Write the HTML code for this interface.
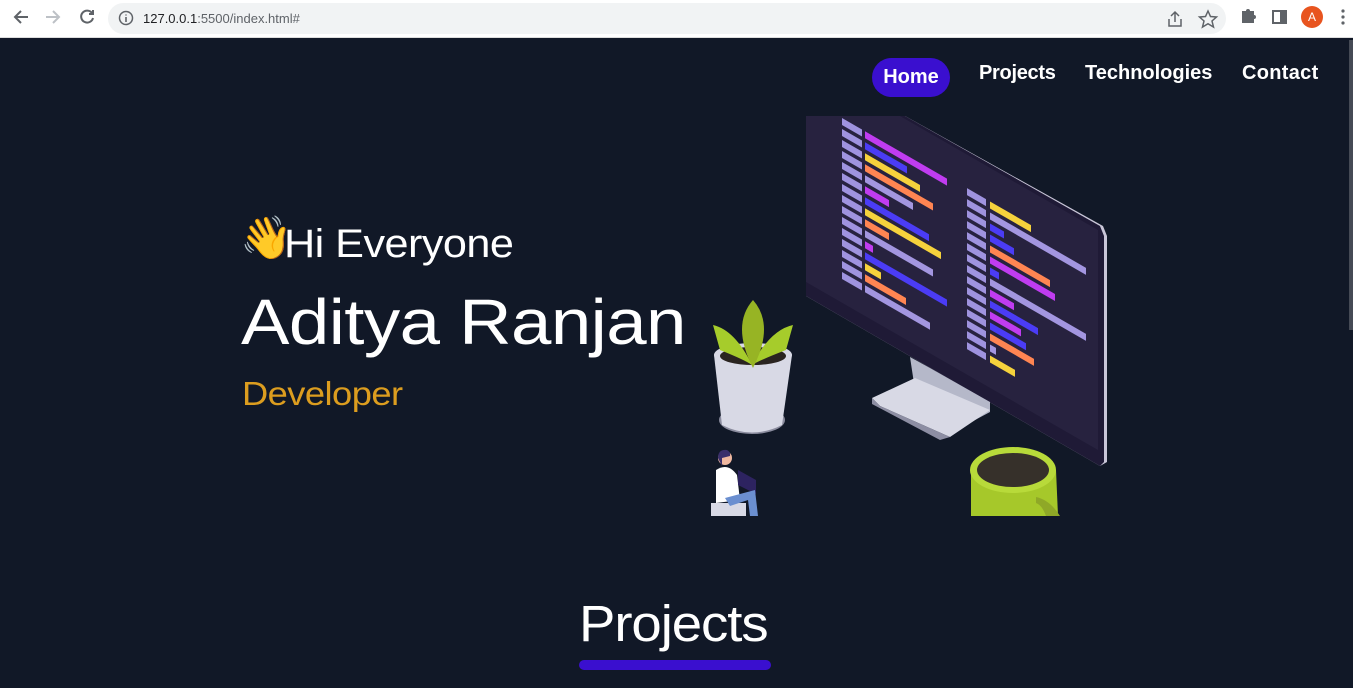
<!DOCTYPE html>
<html><head><meta charset="utf-8"><style>
*{margin:0;padding:0;box-sizing:border-box}
body{width:1353px;height:688px;overflow:hidden;background:#111827;font-family:"Liberation Sans",sans-serif;position:relative}
.chrome{position:absolute;left:0;top:0;width:1353px;height:38px;background:#fff;border-bottom:1px solid #ddd}
.url{position:absolute;left:108px;top:3px;width:1118px;height:31px;background:#f1f3f4;border-radius:16px}
.url span{position:absolute;left:35px;top:8px;font-size:13px;color:#202124}
.nav a{position:absolute;color:#fff;font-weight:bold;font-size:20px;top:62px;letter-spacing:-0.3px}
.home{position:absolute;left:872px;top:58px;width:78px;height:39px;background:#3a0fcf;border-radius:20px;color:#fff;font-weight:bold;font-size:20px;text-align:center;line-height:39px}
.t{position:absolute;color:#fff;white-space:nowrap;transform-origin:0 0}
</style></head><body>
<div class="chrome">
<svg width="100" height="38" style="position:absolute;left:0;top:0" fill="none" stroke-width="2">
<path d="M28 17H15M21 11l-6 6 6 6" stroke="#5f6368"/>
<path d="M46 17h13M53 11l6 6-6 6" stroke="#bdc1c6"/>
<path d="M92 13a6 6 0 1 0 1 5M93 10v4h-4" stroke="#5f6368"/>
</svg>
<div class="url"><svg width="20" height="20" style="position:absolute;left:9px;top:6px"><circle cx="9" cy="9" r="6.5" fill="none" stroke="#5f6368" stroke-width="1.5"/><path d="M9 8v5M9 5.5v1" stroke="#5f6368" stroke-width="1.6"/></svg><span>127.0.0.1<span style="position:static;color:#5f6368">:5500/index.html#</span></span>
<svg width="60" height="20" style="position:absolute;left:1057px;top:6px" fill="none" stroke="#5f6368" stroke-width="1.5"><path d="M4 10v7h12v-7M10 3v10M6 7l4-4 4 4"/><path d="M43 2l2.5 5.5 6 .5-4.5 4 1.5 6-5.5-3.3-5.5 3.3 1.5-6-4.5-4 6-.5z"/></svg></div>
<svg width="120" height="38" style="position:absolute;left:1233px;top:0"><path d="M9 11h4a2 2 0 0 1 4 0h4v4a2 2 0 0 1 0 4v4H9z" fill="#5f6368"/><rect x="40" y="11" width="13" height="12" fill="none" stroke="#5f6368" stroke-width="2"/><rect x="47" y="11" width="6" height="12" fill="#5f6368"/><circle cx="79" cy="17" r="11" fill="#e8541f"/><text x="79" y="21" font-size="12" fill="#fff" text-anchor="middle" font-family="Liberation Sans">A</text><g fill="#5f6368"><circle cx="110" cy="11" r="1.6"/><circle cx="110" cy="17" r="1.6"/><circle cx="110" cy="23" r="1.6"/></g></svg>
</div>
<div class="home">Home</div>
<div class="nav"><a style="left:979px">Projects</a><a style="left:1085px;letter-spacing:0">Technologies</a><a style="left:1242px;letter-spacing:0.3px">Contact</a></div>

<div class="t" style="left:240px;top:214px;font-size:42px">👋</div>
<div class="t" style="left:284px;top:222px;font-size:40px;letter-spacing:-0.5px;transform:scaleX(1.08)">Hi Everyone</div>
<div class="t" style="left:241px;top:285px;font-size:64px;letter-spacing:-0.5px;transform:scaleX(1.135)">Aditya Ranjan</div>
<div class="t" style="left:242px;top:375px;font-size:33px;color:#dc9d1f;letter-spacing:-0.5px;transform:scaleX(1.1)">Developer</div>

<svg width="1353" height="688" style="position:absolute;left:0;top:0">
<polygon points="806,116 905,116 1103,226 1107,236 1107,462 1100,466 806,296" fill="#c9c6d8"/>
<polygon points="806,116 905,116 1100,226 1104,236 1104,462 1100,466 806,296" fill="#1f1a36"/>
<polygon points="806,116 900,116 1098,230 1098,450 806,282" fill="#27223f"/>
<polygon points="910,357 930,368 990,402 990,412 960,428 935,415 915,390" fill="#b5b8c9"/>
<polygon points="915,378 990,410 950,437 880,406 872,398" fill="#d8d9e5"/>
<polygon points="872,398 872,404 940,440 950,437 880,406" fill="#8d8ea3"/>
<g transform="translate(842,0) skewY(30)">
<g fill="#9f93df">
<rect x="0" y="118" width="20" height="7"/><rect x="0" y="129" width="20" height="7"/><rect x="0" y="140" width="20" height="7"/><rect x="0" y="151" width="20" height="7"/><rect x="0" y="162" width="20" height="7"/><rect x="0" y="173" width="20" height="7"/><rect x="0" y="184" width="20" height="7"/><rect x="0" y="195" width="20" height="7"/><rect x="0" y="206" width="20" height="7"/><rect x="0" y="217" width="20" height="7"/><rect x="0" y="228" width="20" height="7"/><rect x="0" y="239" width="20" height="7"/><rect x="0" y="250" width="20" height="7"/><rect x="0" y="261" width="20" height="7"/><rect x="0" y="272" width="20" height="7"/>
<rect x="125" y="116" width="19" height="7"/><rect x="125" y="127" width="19" height="7"/><rect x="125" y="138" width="19" height="7"/><rect x="125" y="149" width="19" height="7"/><rect x="125" y="160" width="19" height="7"/><rect x="125" y="171" width="19" height="7"/><rect x="125" y="182" width="19" height="7"/><rect x="125" y="193" width="19" height="7"/><rect x="125" y="204" width="19" height="7"/><rect x="125" y="215" width="19" height="7"/><rect x="125" y="226" width="19" height="7"/><rect x="125" y="237" width="19" height="7"/><rect x="125" y="248" width="19" height="7"/><rect x="125" y="259" width="19" height="7"/><rect x="125" y="270" width="19" height="7"/>
</g>
<rect x="23" y="118" width="82" height="7" fill="#c03cf0"/>
<rect x="23" y="129" width="42" height="7" fill="#4b3cf5"/>
<rect x="23" y="140" width="55" height="7" fill="#f5d23c"/>
<rect x="23" y="151" width="68" height="7" fill="#ff8552"/>
<rect x="23" y="162" width="48" height="7" fill="#a396e0"/>
<rect x="23" y="173" width="24" height="7" fill="#c03cf0"/>
<rect x="23" y="184" width="64" height="7" fill="#4b3cf5"/>
<rect x="23" y="195" width="76" height="7" fill="#f5d23c"/>
<rect x="23" y="206" width="24" height="7" fill="#ff8552"/>
<rect x="23" y="217" width="68" height="7" fill="#a396e0"/>
<rect x="23" y="228" width="8" height="7" fill="#c03cf0"/>
<rect x="23" y="239" width="82" height="7" fill="#4b3cf5"/>
<rect x="23" y="250" width="16" height="7" fill="#f5d23c"/>
<rect x="23" y="261" width="41" height="7" fill="#ff8552"/>
<rect x="23" y="272" width="65" height="7" fill="#a396e0"/>
<rect x="148" y="116" width="41" height="7" fill="#f5d23c"/>
<rect x="148" y="127" width="96" height="7" fill="#a396e0"/>
<rect x="148" y="138" width="14" height="7" fill="#4b3cf5"/>
<rect x="148" y="149" width="24" height="7" fill="#4b3cf5"/>
<rect x="148" y="160" width="60" height="7" fill="#ff8552"/>
<rect x="148" y="171" width="65" height="7" fill="#c03cf0"/>
<rect x="148" y="182" width="9" height="7" fill="#4b3cf5"/>
<rect x="148" y="193" width="96" height="7" fill="#a396e0"/>
<rect x="148" y="204" width="24" height="7" fill="#c03cf0"/>
<rect x="148" y="215" width="48" height="7" fill="#4b3cf5"/>
<rect x="148" y="226" width="31" height="7" fill="#c03cf0"/>
<rect x="148" y="237" width="36" height="7" fill="#4b3cf5"/>
<rect x="148" y="248" width="44" height="7" fill="#ff8552"/>
<rect x="148" y="259" width="6" height="7" fill="#a396e0"/>
<rect x="148" y="270" width="25" height="7" fill="#f5d23c"/>
</g>
<ellipse cx="752" cy="420" rx="33" ry="14" fill="#8b8c9e"/>
<path d="M714 355 Q752 340 792 355 L782 425 Q752 440 722 425 Z" fill="#d8d9e5"/>
<ellipse cx="753" cy="355" rx="39" ry="12" fill="#d8d9e5"/>
<ellipse cx="753" cy="356" rx="33" ry="9" fill="#2a2420"/>
<path d="M713 325 Q735 330 752 365 Q745 360 720 350 Z" fill="#a6cc2b"/>
<path d="M793 325 Q770 330 752 365 Q760 360 786 350 Z" fill="#a6cc2b"/>
<path d="M753 300 Q775 325 753 368 Q731 325 753 300Z" fill="#97b424"/>
<path d="M971 470 L971 516 L1058 516 L1056 470 Z" fill="#a6c82a"/>
<ellipse cx="1013" cy="470" rx="43" ry="23" fill="#b8da3a"/>
<ellipse cx="1013" cy="470" rx="36" ry="17" fill="#36302a"/>
<path d="M1036 497 Q1050 500 1060 516 L1046 516 Q1042 505 1036 503Z" fill="#8fa827"/>
<rect x="711" y="503" width="35" height="13" fill="#d8d9e5"/>
<path d="M716 470 Q728 462 737 475 L740 500 L716 503Z" fill="#fff"/>
<circle cx="725" cy="458" r="7" fill="#f0b8a0"/>
<path d="M718 458 Q718 449 727 450 Q731 452 730 456 L722 458 L722 466 Z" fill="#3a2f6b"/>
<polygon points="738,470 756,480 756,494 738,485" fill="#2d2360"/>
<path d="M725 498 L755 490 L758 516 L750 516 L748 500 L730 506Z" fill="#6b8fd0"/>
</svg>

<div class="t" style="left:579px;top:594px;font-size:51px;letter-spacing:-1px;transform:scaleX(1.07)">Projects</div>
<div style="position:absolute;left:579px;top:660px;width:192px;height:10px;background:#3a0fcf;border-radius:5px"></div>
<div style="position:absolute;right:0;top:40px;width:4px;height:290px;background:#c1c1c1;opacity:.3"></div>
</body></html>
